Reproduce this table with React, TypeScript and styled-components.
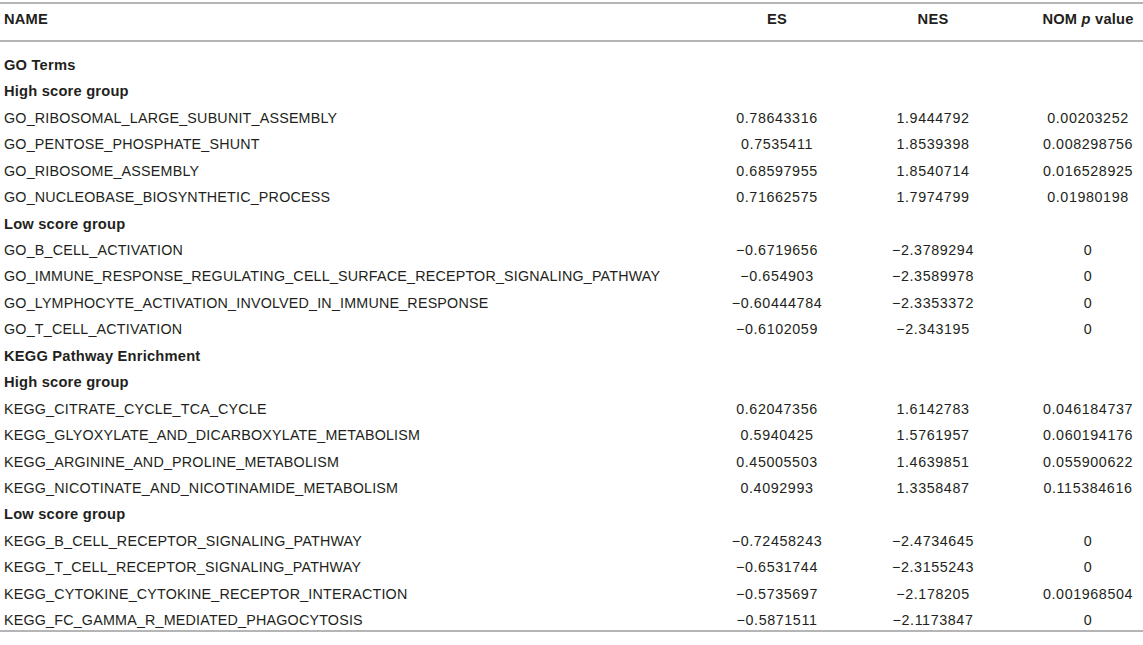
import React from "react";
import styled, { createGlobalStyle } from "styled-components";

const Global = createGlobalStyle`
  html, body { margin: 0; padding: 0; background: #fff; }
  body { font-family: "Liberation Sans", Arial, sans-serif; color: #231f20; }
`;

const COLS = "699px 156px 156px 132px";

const Table = styled.div`
  width: 1143px;
  margin-top: 2px;
  border-top: 2px solid #b5b5b5;
  border-bottom: 2px solid #b5b5b5;
  font-size: 14.3px;
  line-height: 16px;
  letter-spacing: 0.2px;
`;

const Head = styled.div`
  display: grid;
  grid-template-columns: ${COLS};
  height: 38px;
  box-sizing: border-box;
  padding-top: 7px;
  align-items: start;
  border-bottom: 2px solid #b5b5b5;
  font-weight: bold;
  font-size: 14.7px;
`;

const Body = styled.div`
  padding-top: 6px;
`;

const Row = styled.div`
  display: grid;
  grid-template-columns: ${COLS};
  height: 26.45px;
  box-sizing: border-box;
  padding-bottom: 1.5px;
  align-items: end;
`;

const NameCell = styled.div`
  padding-left: 4px;
  white-space: nowrap;
`;

const Label = styled.div`
  padding-left: 4px;
  font-weight: bold;
  font-size: 14.7px;
  white-space: nowrap;
`;

const NumCell = styled.div<{ $last?: boolean }>`
  text-align: center;
  padding-left: ${(p) => (p.$last ? "22px" : "0")};
  white-space: nowrap;
  letter-spacing: 0.6px;
`;

const HeadCell = styled.div<{ $last?: boolean }>`
  text-align: center;
  padding-left: ${(p) => (p.$last ? "22px" : "0")};
  white-space: nowrap;
`;

type Item =
  | { kind: "label"; text: string }
  | { kind: "data"; name: string; es: string; nes: string; p: string };

const items: Item[] = [
  { kind: "label", text: "GO Terms" },
  { kind: "label", text: "High score group" },
  { kind: "data", name: "GO_RIBOSOMAL_LARGE_SUBUNIT_ASSEMBLY", es: "0.78643316", nes: "1.9444792", p: "0.00203252" },
  { kind: "data", name: "GO_PENTOSE_PHOSPHATE_SHUNT", es: "0.7535411", nes: "1.8539398", p: "0.008298756" },
  { kind: "data", name: "GO_RIBOSOME_ASSEMBLY", es: "0.68597955", nes: "1.8540714", p: "0.016528925" },
  { kind: "data", name: "GO_NUCLEOBASE_BIOSYNTHETIC_PROCESS", es: "0.71662575", nes: "1.7974799", p: "0.01980198" },
  { kind: "label", text: "Low score group" },
  { kind: "data", name: "GO_B_CELL_ACTIVATION", es: "−0.6719656", nes: "−2.3789294", p: "0" },
  { kind: "data", name: "GO_IMMUNE_RESPONSE_REGULATING_CELL_SURFACE_RECEPTOR_SIGNALING_PATHWAY", es: "−0.654903", nes: "−2.3589978", p: "0" },
  { kind: "data", name: "GO_LYMPHOCYTE_ACTIVATION_INVOLVED_IN_IMMUNE_RESPONSE", es: "−0.60444784", nes: "−2.3353372", p: "0" },
  { kind: "data", name: "GO_T_CELL_ACTIVATION", es: "−0.6102059", nes: "−2.343195", p: "0" },
  { kind: "label", text: "KEGG Pathway Enrichment" },
  { kind: "label", text: "High score group" },
  { kind: "data", name: "KEGG_CITRATE_CYCLE_TCA_CYCLE", es: "0.62047356", nes: "1.6142783", p: "0.046184737" },
  { kind: "data", name: "KEGG_GLYOXYLATE_AND_DICARBOXYLATE_METABOLISM", es: "0.5940425", nes: "1.5761957", p: "0.060194176" },
  { kind: "data", name: "KEGG_ARGININE_AND_PROLINE_METABOLISM", es: "0.45005503", nes: "1.4639851", p: "0.055900622" },
  { kind: "data", name: "KEGG_NICOTINATE_AND_NICOTINAMIDE_METABOLISM", es: "0.4092993", nes: "1.3358487", p: "0.115384616" },
  { kind: "label", text: "Low score group" },
  { kind: "data", name: "KEGG_B_CELL_RECEPTOR_SIGNALING_PATHWAY", es: "−0.72458243", nes: "−2.4734645", p: "0" },
  { kind: "data", name: "KEGG_T_CELL_RECEPTOR_SIGNALING_PATHWAY", es: "−0.6531744", nes: "−2.3155243", p: "0" },
  { kind: "data", name: "KEGG_CYTOKINE_CYTOKINE_RECEPTOR_INTERACTION", es: "−0.5735697", nes: "−2.178205", p: "0.001968504" },
  { kind: "data", name: "KEGG_FC_GAMMA_R_MEDIATED_PHAGOCYTOSIS", es: "−0.5871511", nes: "−2.1173847", p: "0" },
];

export default function App() {
  return (
    <>
      <Global />
      <Table>
        <Head>
          <Label>NAME</Label>
          <HeadCell>ES</HeadCell>
          <HeadCell>NES</HeadCell>
          <HeadCell $last>
            NOM <i>p</i> value
          </HeadCell>
        </Head>
        <Body>
          {items.map((it, i) =>
            it.kind === "label" ? (
              <Row key={i}>
                <Label>{it.text}</Label>
              </Row>
            ) : (
              <Row key={i}>
                <NameCell>{it.name}</NameCell>
                <NumCell>{it.es}</NumCell>
                <NumCell>{it.nes}</NumCell>
                <NumCell $last>{it.p}</NumCell>
              </Row>
            )
          )}
        </Body>
      </Table>
    </>
  );
}
